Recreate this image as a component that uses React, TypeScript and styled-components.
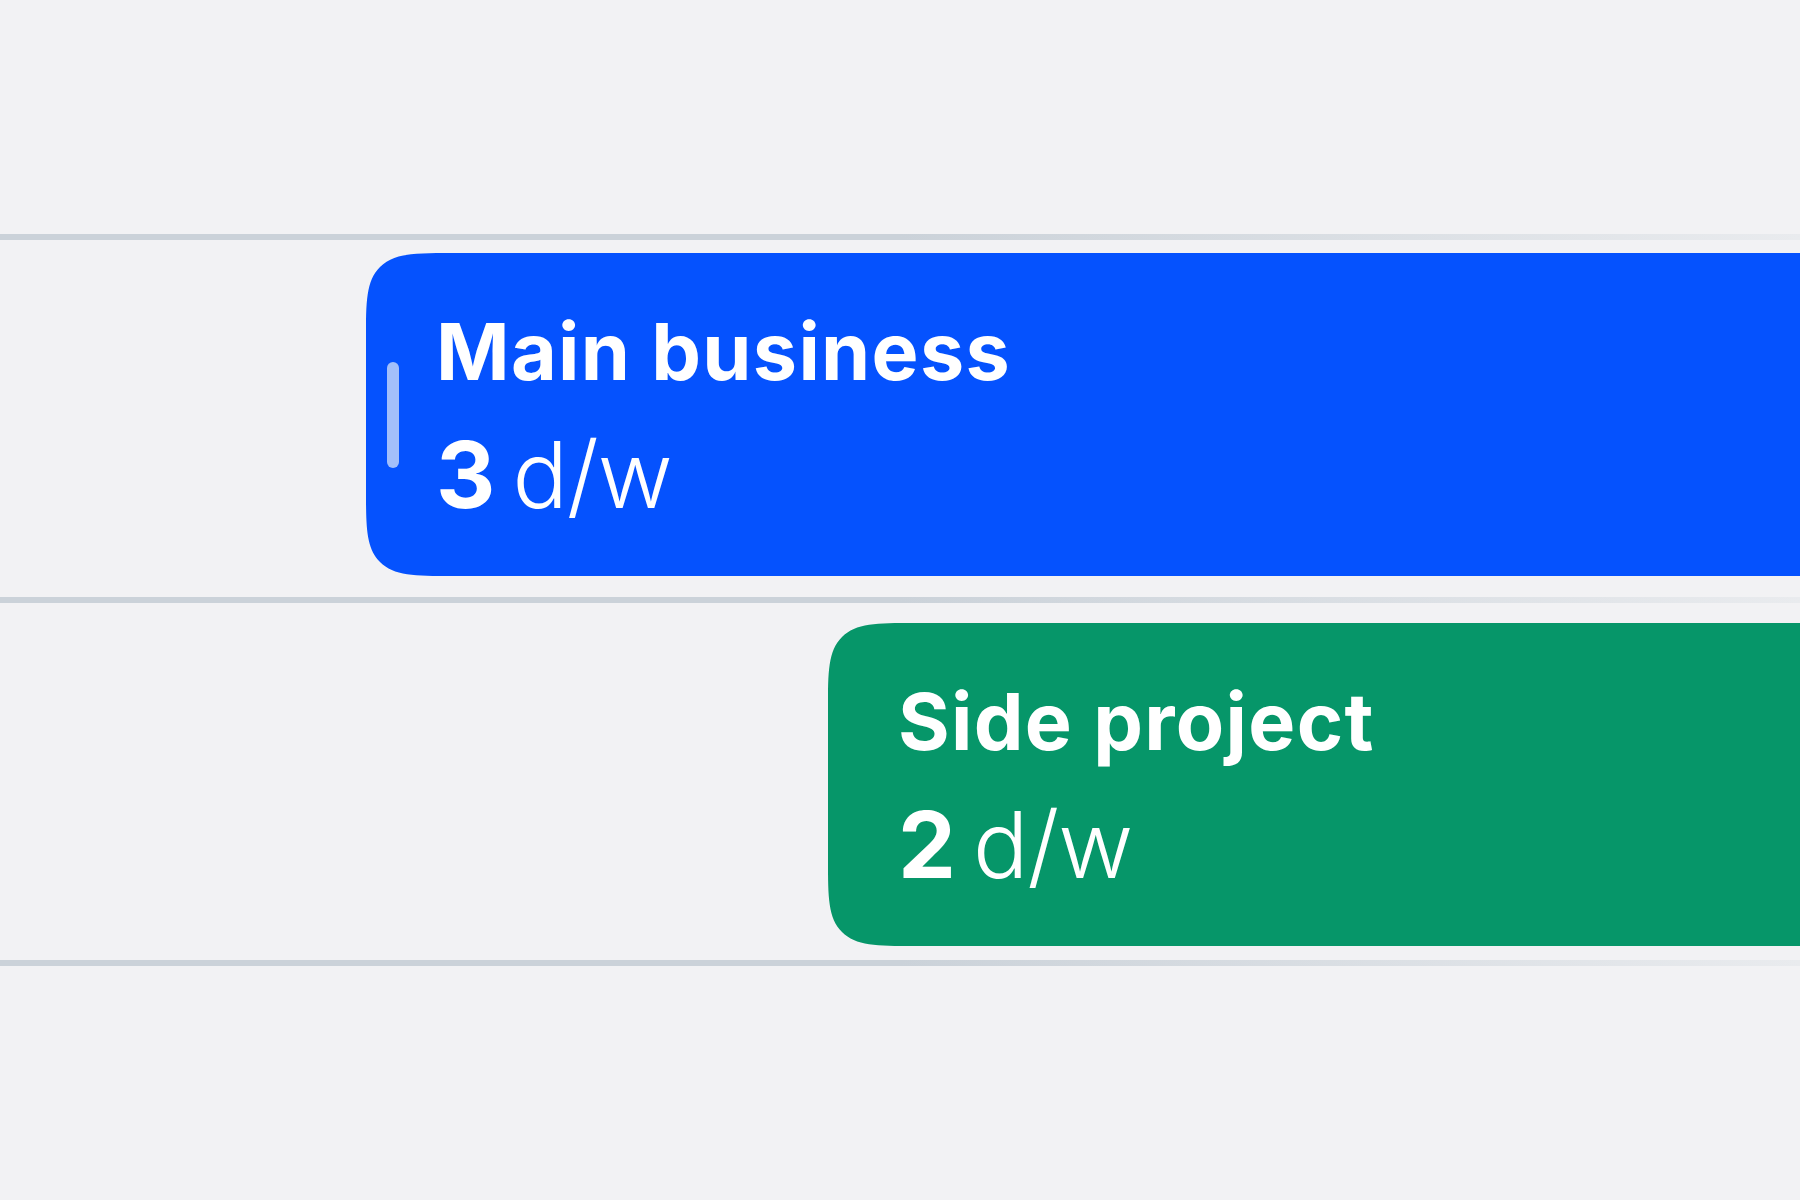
import React from 'react';
import styled, { createGlobalStyle } from 'styled-components';

const GlobalStyle = createGlobalStyle`
    html, body {
        margin: 0;
        padding: 0;
        background: #f2f2f4;
        font-family: Inter, "Noto Sans", sans-serif;
        overflow: hidden;
    }
`;

const Page = styled.div`
    width: 1800px;
    height: 1200px;
    padding-top: 234px;
    box-sizing: border-box;
    overflow: hidden;
`;

// lane separator, fades out towards the right
const Divider = styled.div`
    height: 6px;
    background: linear-gradient(90deg, #cbd2d9 0%, #cbd2d9 50%, #e9ebee 100%);
`;

const Lane = styled.div`
    height: 357px;
    display: flex;
`;

const Card = styled.div<{ $color: string; $left: number; $top: number }>`
    position: relative;
    flex: 1;
    margin-left: ${(p) => p.$left}px;
    margin-top: ${(p) => p.$top}px;
    height: 323px;
    box-sizing: border-box;
    padding: 59px 0 0 70px;
    background: ${(p) => p.$color};
    border-radius: 50px 0 0 50px;
    color: #fff;

    @supports (corner-shape: squircle) {
        border-radius: 88px 0 0 88px;
        corner-shape: squircle;
    }
`;

const Handle = styled.div`
    position: absolute;
    left: 21px;
    top: 50%;
    width: 12px;
    height: 106px;
    transform: translateY(-50%);
    border-radius: 6px;
    background: #a3bffa;
`;

const Title = styled.div`
    font-size: 79px;
    line-height: 1;
    font-weight: 700;
    letter-spacing: 1.3px;
    white-space: nowrap;
`;

const Amount = styled.div`
    margin-top: 38px;
    font-size: 92px;
    line-height: 1;
    font-weight: 300;
    letter-spacing: -1px;
    white-space: nowrap;

    b {
        font-weight: 700;
        margin-right: 18px;
    }
`;

const rows = [
    { name: 'Main business', days: 3, color: '#0552fe', left: 366, top: 13, handle: true },
    { name: 'Side project', days: 2, color: '#069669', left: 828, top: 20, handle: false },
];

export default function App() {
    return (
        <Page>
            <GlobalStyle />
            <Divider />
            {rows.map((r) => (
                <React.Fragment key={r.name}>
                    <Lane>
                        <Card $color={r.color} $left={r.left} $top={r.top}>
                            {r.handle && <Handle />}
                            <Title>{r.name}</Title>
                            <Amount>
                                <b>{r.days}</b>d/w
                            </Amount>
                        </Card>
                    </Lane>
                    <Divider />
                </React.Fragment>
            ))}
        </Page>
    );
}
